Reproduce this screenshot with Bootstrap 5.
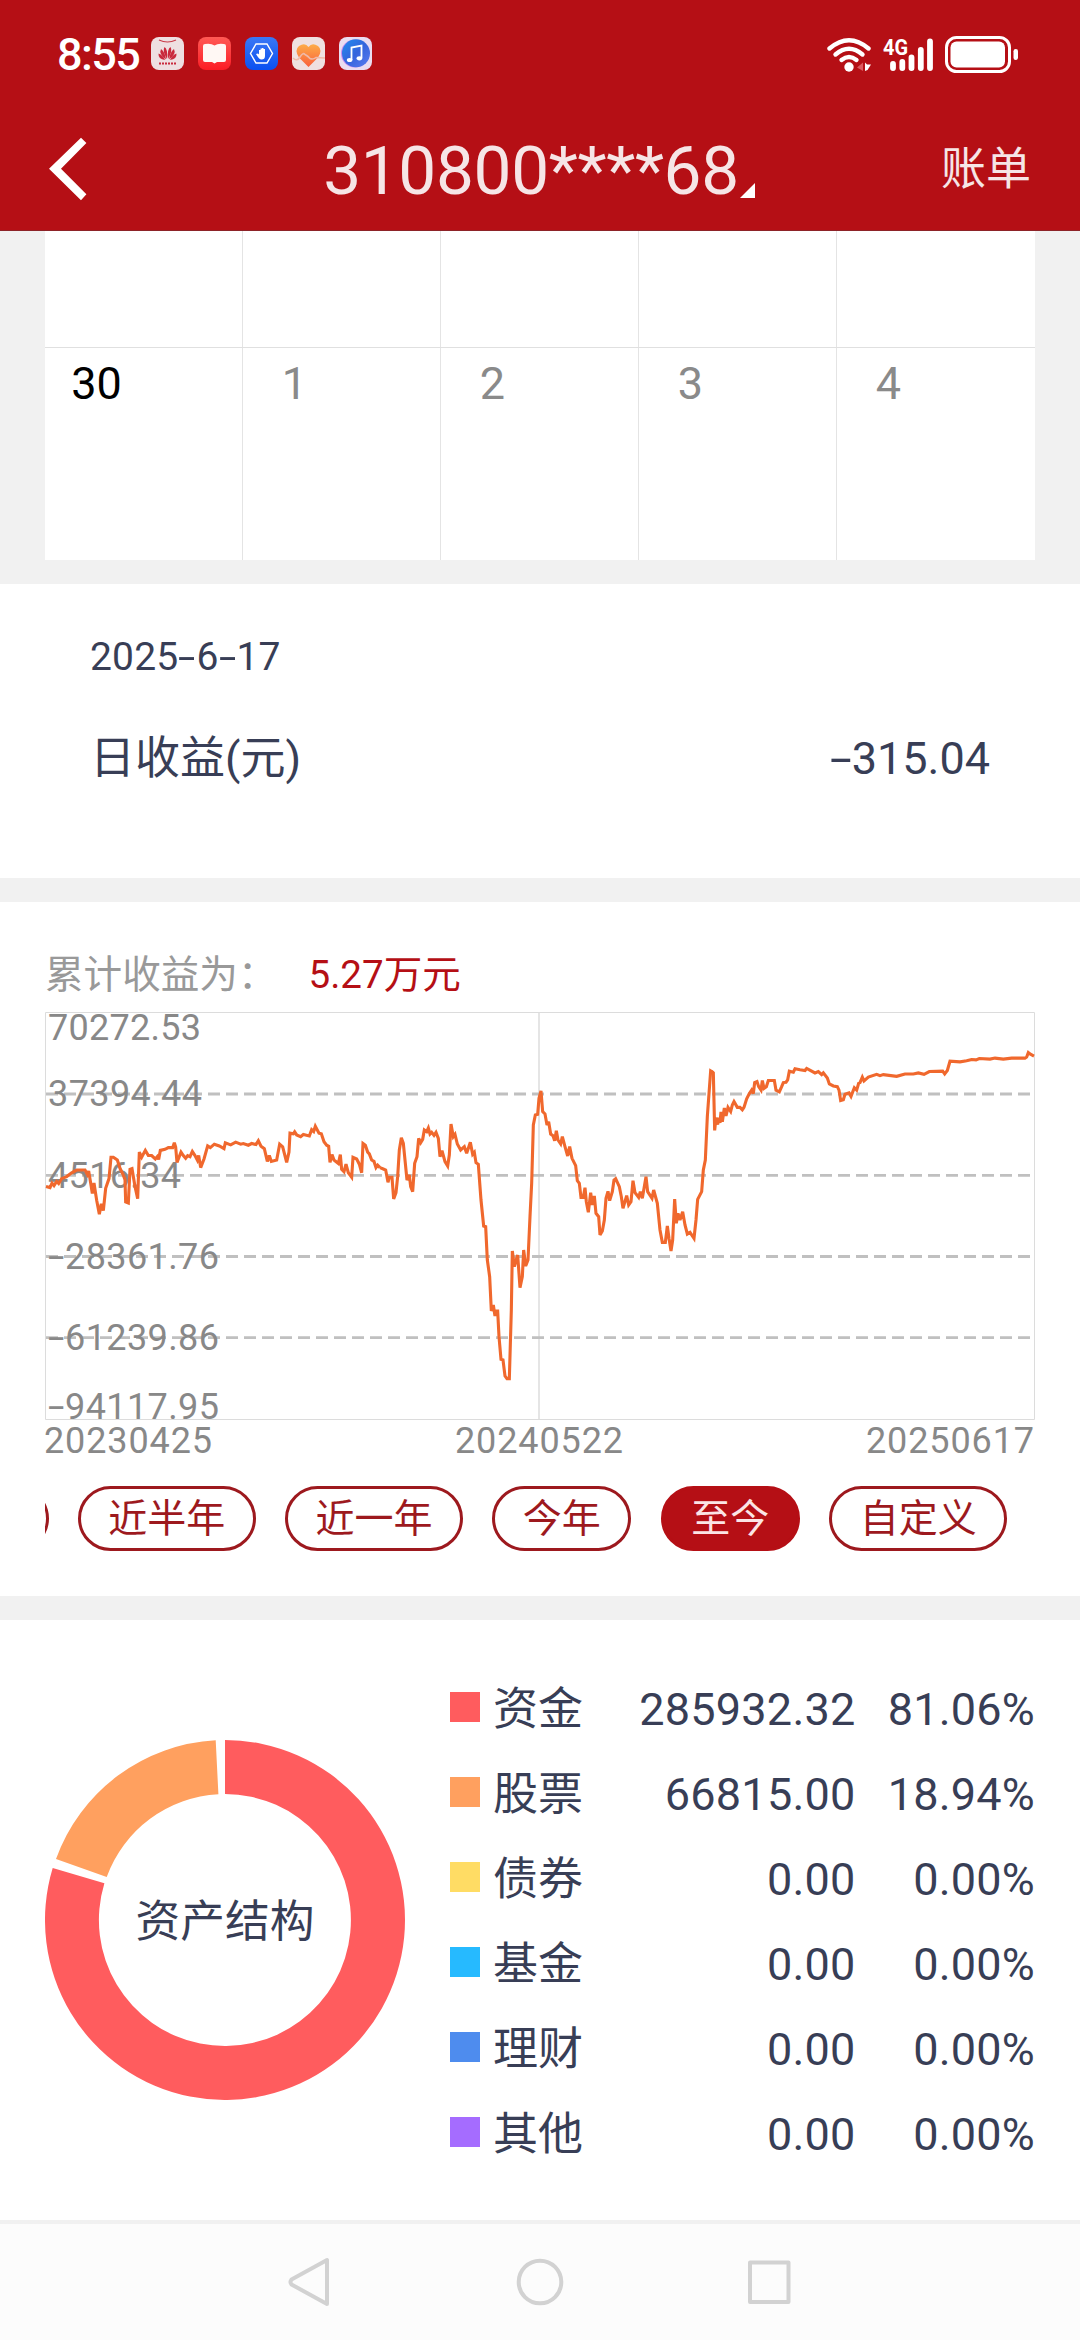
<!DOCTYPE html>
<html lang="zh-CN">
<head>
<meta charset="utf-8">
<meta name="viewport" content="width=device-width, initial-scale=1">
<title>账单</title>
<link rel="stylesheet" href="https://cdn.jsdelivr.net/npm/bootstrap@5.3.0/dist/css/bootstrap.min.css">
<style>
  :root { --brand: #b50f15; --ink: #383e56; --band: #f1f1f1; }
  html, body { overflow: hidden; }
  body { width: 1080px; height: 2340px; background: var(--band); color: var(--ink);
         font-family: Roboto, "Noto Sans CJK SC", sans-serif; font-size: 45px; line-height: 60px; }
  svg { display: block; flex: none; }
  .topbar { height: 231px; background: var(--brand); border-bottom: 1px solid #8d2328; }
  .status { height: 107px; padding: 0 61px 0 57px; }
  .clock { font-weight: 500; font-size: 45px; letter-spacing: -1.6px; width: 94px; padding-top: 2px; }
  .titlebar { height: 123px; padding: 0 49px; color: #f6e5e6; }
  .side-slot { width: 120px; }
  .bill-link { padding-top: 2px; }
  .acct-box { padding-top: 4px; }
  .acct { font-size: 67.5px; line-height: 90px; letter-spacing: -.35px; }
  .calendar { margin: 0 45px 24px; background: #fff; }
  .week { display: grid; grid-template-columns: repeat(5, 198px); }
  .week > div { border-right: 1px solid #e4e4e4; }
  .week > div:last-child { border-right: 0; }
  .week-cut { height: 116px; }
  .week-end { height: 213px; border-top: 1px solid #e0e0e0; color: #8a8a8a; }
  .daynum { width: 103px; padding-top: 6px; text-align: center; }
  .panel { background: #fff; }
  .daily { height: 294px; padding: 43px 90px 0; margin-bottom: 24px; }
  .daily-row { margin-top: 42px; }
  .neg { display: inline-block; width: .49em; transform: scaleX(1.75); transform-origin: 0 50%; }
  .date-line { font-size: 39px; letter-spacing: .2px; }
  .date-line .neg { width: .46em; transform: scaleX(1.6); }
  .trend { height: 694px; padding: 43px 45px 0; margin-bottom: 24px; }
  .trend-head { height: 67px; font-size: 38.6px; color: #999; }
  .trend-head b { font-weight: 400; color: var(--brand); margin-left: 32px; }
  .ranges { gap: 29.6px; margin-top: 24px; height: 65px; }
  .range-pill { flex: none; width: 177.5px; height: 65px; border: 3px solid #9d191e; border-radius: 33px; color: #9d191e;
                font-size: 39px; line-height: 60px; padding: 0; background: #fff; text-align: center; }
  .range-pill.short { width: 139px; }
  .range-pill.chosen { background: var(--brand); border-color: var(--brand); color: #fbe4e5; }
  .range-pill.scrolled { margin-left: -174px; }
  .assets { height: 600px; padding: 47px 45px 0; }
  .donut { margin-top: 73px; }
  .legend-list { width: 585px; }
  .legend-line { height: 85px; }
  .swatch { width: 30px; height: 30px; margin: 0 13px 5px 0; }
  .kind { width: 120px; }
  .amount { width: 244px; text-align: right; letter-spacing: .25px; }
  .share { width: 180px; text-align: right; letter-spacing: .2px; }
  .navkeys { height: 120px; background: #fcfcfc; border-top: 4px solid var(--band); }
</style>
</head>
<body>
<header class="topbar">
  <div class="status d-flex align-items-center justify-content-between text-white">
    <div class="d-flex align-items-center">
      <span class="clock">8:55</span>
      <svg width="222" height="34" viewBox="151 37 222 34">
        <defs>
          <linearGradient id="gRed" x2="0" y2="1"><stop stop-color="#ff5a55"/><stop offset="1" stop-color="#fc1c24"/></linearGradient>
          <linearGradient id="gBlue" x2="0" y2="1"><stop stop-color="#3a78f5"/><stop offset="1" stop-color="#0a50f0"/></linearGradient>
          <linearGradient id="gHeart" x2="0" y2="1"><stop stop-color="#fdac48"/><stop offset="1" stop-color="#f9603c"/></linearGradient>
          <linearGradient id="gMusic" x1="0" x2="1" y2="1"><stop stop-color="#1f8df0"/><stop offset=".5" stop-color="#3564dc"/><stop offset="1" stop-color="#5c7cf0"/></linearGradient>
        </defs>
        <rect x="151" y="37" width="33" height="33" rx="8" fill="#eedfe1"/>
        <path d="M159 40Q167.500 44 176 40" fill="none" stroke="#c93a48" stroke-width="1.200"/>
        <g fill="#c9293c">
          <path d="M167 59Q162 51 164.500 47Q168 49 167 59Z"/>
          <path d="M166 59.500Q158.500 54 161 49Q165 52 166 59.500Z"/>
          <path d="M165 60Q158 59 158.500 53.500Q163 55 165 60Z"/>
          <path d="M168 59Q173 51 170.500 47Q167 49 168 59Z"/>
          <path d="M169 59.500Q176.500 54 174 49Q170 52 169 59.500Z"/>
          <path d="M170 60Q177 59 176.500 53.500Q172 55 170 60Z"/>
        </g>
        <path d="M159 63.500H176" stroke="#c9293c" stroke-width="2" stroke-dasharray="2 1"/>
        <rect x="198" y="37" width="33" height="33" rx="8" fill="url(#gRed)"/>
        <path d="M205 44Q211 43 214.500 45.500Q218 43 224 44Q226 44 226 46V60Q226 62 224 62H217L214.500 63.500L212 62H205Q203 62 203 60V46Q203 44 205 44Z" fill="#fff8f4"/>
        <rect x="245" y="37" width="33" height="33" rx="8" fill="url(#gBlue)"/>
        <path d="M256 44H267L272.500 53.500L267 63H256L250.500 53.500Z" fill="none" stroke="#fff" stroke-width="1.400"/>
        <path d="M256 54L258 53.500L259 54.500V50H260.500V48.500H262V48H263.500V49H265V56Q265 59.500 261.500 59.500Q259 59.500 256 54Z" fill="#fff"/>
        <rect x="292" y="37" width="33" height="33" rx="8" fill="#efe0e0"/>
        <path d="M308.500 67L299 57.500Q294 50 299 46Q305 42 308.500 47Q312 42 318 46Q323 50 318 57.500Z" fill="url(#gHeart)"/>
        <path d="M293 58Q297 62 300 57T305 54.500Q308 56 310 58.500Q313 60 316 57.500L325 58" fill="none" stroke="#efb9a8" stroke-width="1.600"/>
        <rect x="339" y="37" width="33" height="33" rx="8" fill="#eadcf0"/>
        <circle cx="355" cy="53.500" r="14" fill="#c58cf0"/><circle cx="356" cy="53.300" r="14" fill="url(#gMusic)"/>
        <path d="M351.500 60V47.500L361.500 45.500V58" fill="none" stroke="#fff" stroke-width="1.800"/>
        <ellipse cx="349.600" cy="60" rx="2.800" ry="2.100" fill="#fff"/><ellipse cx="359.400" cy="58.300" rx="2.800" ry="2.100" fill="#fff"/>
      </svg>
    </div>
    <svg width="192" height="38" viewBox="827 34 192 38">
      <g fill="none" stroke="#fff" stroke-width="4.400" stroke-linecap="round">
        <path d="M829.500 47.500Q849 31 868.500 47.500"/><path d="M835.500 53.500Q849 42 862.500 53.500"/><path d="M841.500 59Q849 53 856.500 59"/>
      </g>
      <circle cx="849" cy="66" r="4.700" fill="#fff"/>
      <path d="M863 61.500V70L857 66.500Z" fill="#dc5a60"/><path d="M865 61.500L867 63.500L871 63.500L867.500 69L865 70Z" fill="#fff"/>
      <text x="883" y="53.500" font-family="Roboto" font-weight="700" font-size="22.500" fill="#fff" textLength="25" lengthAdjust="spacingAndGlyphs">4G</text>
      <path d="M893 63V67M902.300 61V67M911.500 56.500V67M920.800 49V67M930 40.500V67" stroke="#fff" stroke-width="5.800" stroke-linecap="round"/>
      <rect x="946.500" y="36.500" width="63" height="34" rx="10" fill="none" stroke="#fff" stroke-width="3"/>
      <rect x="950.500" y="40.500" width="54.500" height="26" rx="6" fill="#fff"/>
      <rect x="1013.500" y="48" width="4.500" height="11" rx="2.200" fill="#fff"/>
    </svg>
  </div>
  <div class="titlebar d-flex align-items-center justify-content-between">
    <div class="side-slot">
      <svg width="38" height="64" viewBox="49 136 38 64"><path d="M49 167.700L81 136.700L86.400 142L61 167.700L86.400 193.300L81 199.300Z" fill="#fff"/></svg>
    </div>
    <div class="acct-box d-flex align-items-end">
      <span class="acct">310800****68</span>
      <svg width="18" height="34" viewBox="0 0 18 34"><path d="M1 16H16V1Z" fill="#fff"/></svg>
    </div>
    <div class="side-slot bill-link text-end">账单</div>
  </div>
</header>

<main>
  <section class="calendar">
    <div class="week week-cut"><div></div><div></div><div></div><div></div><div></div></div>
    <div class="week week-end">
      <div><div class="daynum text-black">30</div></div>
      <div><div class="daynum">1</div></div>
      <div><div class="daynum">2</div></div>
      <div><div class="daynum">3</div></div>
      <div><div class="daynum">4</div></div>
    </div>
  </section>

  <section class="panel daily">
    <div class="date-line">2025<span class="neg">-</span>6<span class="neg">-</span>17</div>
    <div class="daily-row d-flex justify-content-between"><span>日收益(元)</span><span><span class="neg">-</span>315.04</span></div>
  </section>

  <section class="panel trend">
    <div class="trend-head">累计收益为：<b>5.27万元</b></div>
    <svg width="990" height="450" viewBox="45 1012 990 450">
      <path d="M45.500 1012.500H1034.500V1419.500H45.500Z" fill="none" stroke="#dcdcdc"/>
      <path d="M539 1012V1419" stroke="#dcdcdc" stroke-width="1.500"/>
      <path d="M46 1094H1033M46 1175.300H1033M46 1256.500H1033M46 1337.700H1033" stroke="#c0c0c0" stroke-width="2.800" stroke-dasharray="12 6"/>
      <g font-family="Roboto" font-size="36" fill="#888">
        <text x="48" y="1039.500" textLength="153">70272.53</text>
        <text x="48" y="1106" textLength="154">37394.44</text>
        <text x="48" y="1187.500" textLength="133">4516.34</text>
        <g><text transform="translate(48 1268.700) scale(1.650 1)">-</text><text x="65" y="1268.700" textLength="154">28361.76</text></g>
        <g><text transform="translate(48 1350) scale(1.650 1)">-</text><text x="65" y="1350" textLength="154">61239.86</text></g>
        <g><text transform="translate(48 1419.300) scale(1.650 1)">-</text><text x="65" y="1419.300" textLength="154">94117.95</text></g>
        <text x="44" y="1452.700" textLength="168">20230425</text>
        <text x="455" y="1452.700" textLength="168">20240522</text>
        <text x="866" y="1452.700" textLength="168">20250617</text>
      </g>
      <g fill="none" stroke="#f0682d" stroke-width="3.100" stroke-linejoin="miter" stroke-miterlimit="3">
        <polyline vector-effect="non-scaling-stroke" transform="translate(30 930) scale(.33333 .34436)" points="48,745 60,748 66,735 72,742 80,730 86,736 95,722 110,716 125,705 140,697 165,697 172,710 176,700 182,735 187,765 192,735 200,785 208,825 214,795 220,815 227,750 237,722 243,660 250,660 262,668 270,692 280,712 285,725 287,790 295,793 300,695 306,693 315,745 323,780 328,645 335,660 346,640 355,655 365,655 376,665 382,658 386,666 391,640 405,637 415,632 428,632 433,618 437,630 441,675 453,645 460,655 467,663 473,655 480,658 487,643 495,655 502,668 506,655 512,690 522,665 533,627 541,632 553,622 568,627 582,635 586,618 602,624 617,616 632,622 640,620 655,625 665,620 678,623 685,612 693,628 703,635 712,672 718,655 724,672 740,668 749,622 758,630 770,675 777,645 780,590 790,592 794,586 800,595 812,600 820,594 838,598 845,580 851,585 856,570 867,590 874,592 882,615 890,625 896,628 900,675 906,652 912,668 925,678 931,652 935,695 942,702 948,680 955,705 965,718 969,660 980,665 988,680 995,705 999,620 1006,625 1013,645 1018,650 1025,668 1032,672 1038,690 1043,683 1050,690"/>
        <polyline vector-effect="non-scaling-stroke" transform="translate(370 990) scale(.33333)" points="30,533 40,537 47,540 54,577 58,562 66,562 71,627 78,608 83,560 88,480 94,443 100,460 106,520 111,570 118,555 122,590 128,605 134,520 141,500 146,445 152,458 158,448 163,420 170,425 175,414 180,432 185,427 192,436 198,427 205,445 210,500 216,482 225,515 233,528 238,495 243,402 250,440 255,433 262,462 272,480 283,470 290,490 301,457 308,493 313,487 318,518 325,523 333,630 341,708 347,710 352,810 359,860 364,963 370,945 375,978 377,963 383,963 387,1040 393,1108 399,1110 405,1158 411,1166 418,1166 424,960 427,783 433,830 443,795 450,893 457,860 461,780 467,828 474,810 480,680 485,580 490,405 496,375 503,373 507,325 513,303 518,365 525,372 531,405 536,395 542,432 549,437 554,452 559,422 564,450 572,462 577,440 585,470 593,498 599,470 606,505 617,527 622,572 628,580 633,622 640,622 645,593 649,635 655,667 662,608 667,645 673,618 678,670 686,680 690,735 697,723 703,690 708,625 714,604 719,632 727,605 732,570 737,566 748,590 754,620 759,655 770,617 776,645 783,635 789,572 795,608 806,622 811,605 817,625 828,560 833,605 846,625 851,600 862,640 870,720 877,757 886,757 892,708 897,745 903,783 908,750 914,627 919,700 924,670 930,690 938,665 945,705 952,732 960,727 972,745 978,690 983,628 995,605 1000,540 1006,510 1012,380 1022,243 1030,248"/>
        <polyline vector-effect="non-scaling-stroke" transform="translate(700 930) scale(.33333 .34436)" points="34,411 40,415 44,582 48,545 53,565 57,545 60,560 63,528 67,557 73,517 78,540 84,515 92,527 97,508 102,498 112,515 120,515 127,522 132,515 140,490 148,475 155,465 160,475 164,443 171,440 176,455 183,465 187,437 192,460 199,455 205,437 223,437 228,465 238,470 245,455 250,443 258,442 263,435 268,410 280,413 285,403 300,406 315,408 320,402 328,406 345,415 355,411 365,420 370,415 382,430 388,447 400,453 412,455 417,465 422,495 430,493 435,477 447,473 453,483 463,458 470,465 476,445 480,443 487,427 492,438 505,427 530,419 540,423 550,420 590,425 615,418 640,418 655,415 672,419 688,411 728,410 734,418 742,408 750,381 780,383 800,380 815,376 828,377 838,373 870,375 885,372 910,375 935,372 975,372 980,369 985,356 990,360 1002,366"/>
      </g>
    </svg>
    <div class="ranges d-flex overflow-hidden">
      <span class="range-pill scrolled"></span>
      <button class="range-pill">近半年</button>
      <button class="range-pill">近一年</button>
      <button class="range-pill short">今年</button>
      <button class="range-pill short chosen">至今</button>
      <button class="range-pill">自定义</button>
    </div>
  </section>

  <section class="panel assets d-flex justify-content-between align-items-start">
    <svg class="donut" width="360" height="360" viewBox="45 1740 360 360">
      <path d="M225 1740A180 180 0 1 1 52.700 1867.900L104.400 1883.200A126 126 0 1 0 225 1794Z" fill="#ff5c5e"/>
      <path d="M56 1859A180 180 0 0 1 215.700 1740.300L218.400 1794.200A126 126 0 0 0 106.700 1877Z" fill="#ffa05f"/>
      <text x="225" y="1937" text-anchor="middle" font-family="Noto Sans CJK SC" font-size="44.700" fill="#383e56">资产结构</text>
    </svg>
    <div class="legend-list">
      <div class="legend-line d-flex align-items-center"><i class="swatch" style="background:#ff5c5e"></i><span class="kind">资金</span><span class="amount">285932.32</span><span class="share">81.06%</span></div>
      <div class="legend-line d-flex align-items-center"><i class="swatch" style="background:#ffa05f"></i><span class="kind">股票</span><span class="amount">66815.00</span><span class="share">18.94%</span></div>
      <div class="legend-line d-flex align-items-center"><i class="swatch" style="background:#ffdc64"></i><span class="kind">债券</span><span class="amount">0.00</span><span class="share">0.00%</span></div>
      <div class="legend-line d-flex align-items-center"><i class="swatch" style="background:#26baff"></i><span class="kind">基金</span><span class="amount">0.00</span><span class="share">0.00%</span></div>
      <div class="legend-line d-flex align-items-center"><i class="swatch" style="background:#4e8cee"></i><span class="kind">理财</span><span class="amount">0.00</span><span class="share">0.00%</span></div>
      <div class="legend-line d-flex align-items-center"><i class="swatch" style="background:#a56cff"></i><span class="kind">其他</span><span class="amount">0.00</span><span class="share">0.00%</span></div>
    </div>
  </section>
</main>

<footer class="navkeys d-flex justify-content-center align-items-center">
  <svg width="520" height="56" viewBox="280 2254 520 56" fill="none" stroke="#d2d2d2" stroke-width="4" stroke-linejoin="round">
    <path d="M327 2260V2304L291.500 2284.500Q289.500 2282 291.500 2279.500Z"/>
    <circle cx="540" cy="2282" r="21.300"/>
    <rect x="750" y="2262.500" width="38.500" height="39.500"/>
  </svg>
</footer>
<script src="https://cdn.jsdelivr.net/npm/bootstrap@5.3.0/dist/js/bootstrap.bundle.min.js"></script>
</body>
</html>
